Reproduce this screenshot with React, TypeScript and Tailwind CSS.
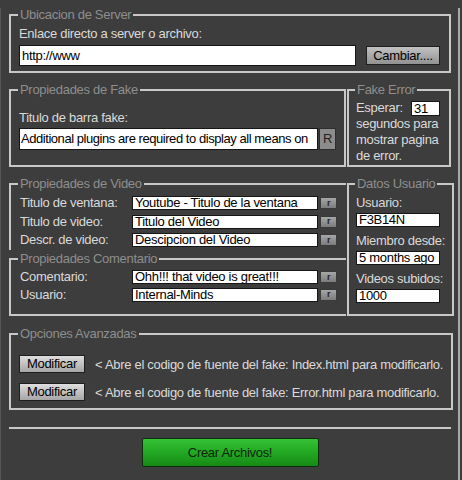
import type { ReactNode } from "react";

function Box({ title, className, children }: { title: string; className: string; children: ReactNode }) {
    return (
        <fieldset className={"border-[#c8c8c8] " + className}>
            <legend className="-ml-px px-[2px] text-[13px] leading-[14px] text-[#8e8e8e]">{title}</legend>
            {children}
        </fieldset>
    );
}

function Field({ value, className }: { value: string; className: string }) {
    return (
        <div className={"overflow-hidden whitespace-nowrap border border-[#161616] bg-white px-[2px] text-black " + className}>
            {value}
        </div>
    );
}

function SmallR() {
    return (
        <div className="ml-[2px] flex h-[12px] w-[17px] items-center justify-center border border-[#3a3a3a] bg-linear-to-b from-[#a6a6a6] to-[#7c7c7c] text-[9px] font-bold leading-[9px] text-[#262626]">
            r
        </div>
    );
}

const video = [
    { label: "Titulo de ventana:", value: "Youtube - Titulo de la ventana" },
    { label: "Titulo de video:", value: "Titulo del Video" },
    { label: "Descr. de video:", value: "Descipcion del Video" },
];

const comentario = [
    { label: "Comentario:", value: "Ohh!!! that video is great!!!" },
    { label: "Usuario:", value: "Internal-Minds" },
];

export default function App() {
    return (
        <div className="h-[480px] w-[462px] overflow-hidden whitespace-nowrap bg-[#3d3d3d] font-['Liberation_Sans',Arial,sans-serif] text-[13px] tracking-[-0.3px] text-[#dadada]">
            <div className="h-[477px] w-[460px] border-b-2 border-l border-r-2 border-b-[#a9a9a9] border-l-[#555555] border-r-[#a9a9a9] pl-[8px]">
                {/* Ubicacion */}
                <Box title="Ubicacion de Server" className="mt-[8px] w-[442px] border-2 px-[8px] pt-[4px] pb-[5px]">
                    <div className="leading-[15px]">Enlace directo a server o archivo:</div>
                    <div className="mt-[4px] flex items-center gap-[10px]">
                        <Field value="http://www" className="h-[21px] w-[337px] leading-[19px]" />
                        <button type="button" className="h-[19px] w-[74px] border border-[#1e1e1e] bg-linear-to-b from-[#c2c2c2] to-[#929292] leading-[17px] text-black">
                            Cambiar....
                        </button>
                    </div>
                </Box>

                {/* Fake */}
                <div className="mt-[10px] flex gap-[1px]">
                    <Box title="Propiedades de Fake" className="h-[84px] w-[337px] border-2 px-[8px] pt-[13px]">
                        <div className="leading-[15px]">Titulo de barra fake:</div>
                        <div className="mt-[3px] flex gap-[1px]">
                            <Field value="Additional plugins are required to display all means on" className="h-[22px] w-[299px] pl-[1px] leading-[20px] tracking-[-0.45px]" />
                            <div className="flex h-[22px] w-[17px] items-center justify-center border border-[#2e2e2e] bg-[#8c8c8c] text-[#222]">
                                R
                            </div>
                        </div>
                    </Box>
                    <Box title="Fake Error" className="h-[84px] w-[104px] border-2 px-[7px] pt-[3px] leading-[16px]">
                        <div className="flex items-center justify-between pr-[2px]">
                            <span>Esperar:</span>
                            <Field value="31" className="h-[15px] w-[29px] leading-[13px]" />
                        </div>
                        <div>segundos para</div>
                        <div>mostrar pagina</div>
                        <div>de error.</div>
                    </Box>
                </div>

                {/* Video / Comentario / Usuario */}
                <div className="mt-[10px] flex gap-[1px]">
                    <div className="flex w-[337px] flex-col">
                        <Box title="Propiedades de Video" className="h-[73px] border-l-2 border-t-2 pl-[8px] pt-[5px]">
                            <div className="flex flex-col gap-[4.5px]">
                                {video.map((row) => (
                                    <div key={row.label} className="flex h-[14px] items-center">
                                        <span className="w-[113px] pl-[1px]">{row.label}</span>
                                        <Field value={row.value} className="h-[14px] w-[186px] leading-[12px]" />
                                        <SmallR />
                                    </div>
                                ))}
                            </div>
                        </Box>
                        <Box title="Propiedades Comentario" className="mt-[2px] h-[64px] border-b-2 border-l-2 border-t-2 pl-[8px] pt-[4px]">
                            <div className="flex flex-col gap-[3.5px]">
                                {comentario.map((row) => (
                                    <div key={row.label} className="flex h-[14px] items-center">
                                        <span className="w-[113px] pl-[1px]">{row.label}</span>
                                        <Field value={row.value} className="h-[14px] w-[186px] leading-[12px]" />
                                        <SmallR />
                                    </div>
                                ))}
                            </div>
                        </Box>
                    </div>
                    <Box title="Datos Usuario" className="h-[139px] w-[104px] border-2 px-[7px] pt-[3.5px]">
                        <div className="leading-[15px]">Usuario:</div>
                        <Field value="F3B14N" className="mt-[3.5px] h-[14px] w-[84px] leading-[12px]" />
                        <div className="mt-[5.5px] leading-[15px]">Miembro desde:</div>
                        <Field value="5 months ago" className="mt-[3.5px] h-[14px] w-[84px] leading-[12px]" />
                        <div className="mt-[5.5px] leading-[15px]">Videos subidos:</div>
                        <Field value="1000" className="mt-[3.5px] h-[14px] w-[84px] leading-[12px]" />
                    </Box>
                </div>

                {/* Opciones */}
                <Box title="Opciones Avanzadas" className="mt-[11px] w-[442px] border-2 px-[8px] pt-[14px] pb-[7px]">
                    <div className="flex flex-col gap-[10px]">
                        {["Index.html", "Error.html"].map((file) => (
                            <div key={file} className="flex items-center gap-[10px]">
                                <button type="button" className="h-[18px] w-[66px] shrink-0 border border-[#1e1e1e] bg-linear-to-b from-[#dedede] to-[#a6a6a6] leading-[16px] text-black">
                                    Modificar
                                </button>
                                <span className="leading-[15px]">&lt; Abre el codigo de fuente del fake: {file} para modificarlo.</span>
                            </div>
                        ))}
                    </div>
                </Box>

                <div className="mt-[17px] h-[2px] w-[442px] bg-[#c8c8c8]" />

                <div className="w-[442px]">
                    <button type="button" className="mx-auto mt-[9px] block h-[29px] w-[177px] rounded-[2px] border border-[#0c2e0c] bg-linear-to-b from-[#36c236] via-[#22a822] to-[#168a16] text-[#0f230f]">
                        Crear Archivos!
                    </button>
                </div>
            </div>
        </div>
    );
}
